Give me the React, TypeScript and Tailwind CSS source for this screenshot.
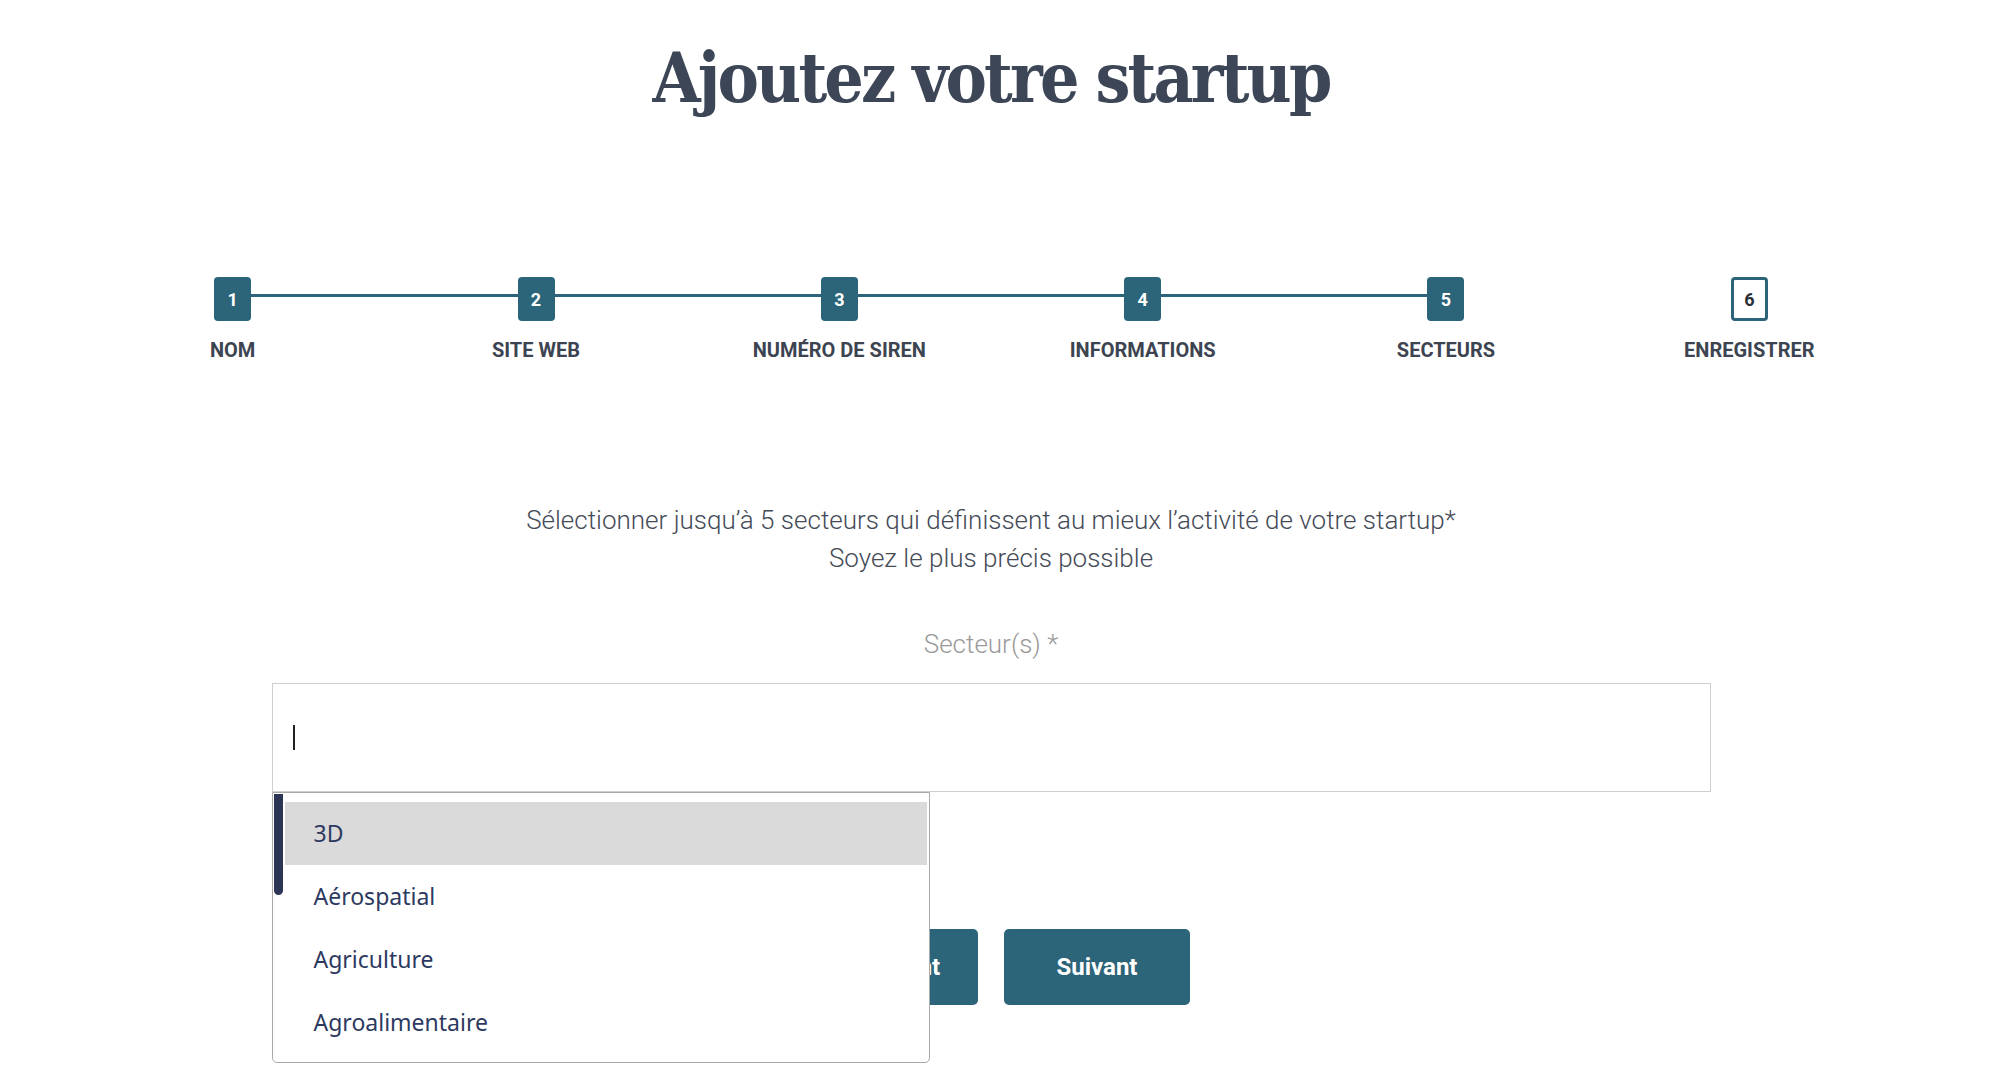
import React from "react";

const steps = [
  { n: 1, label: "NOM", done: true },
  { n: 2, label: "SITE WEB", done: true },
  { n: 3, label: "NUMÉRO DE SIREN", done: true },
  { n: 4, label: "INFORMATIONS", done: true },
  { n: 5, label: "SECTEURS", done: true },
  { n: 6, label: "ENREGISTRER", done: false },
];

const sectors = ["3D", "Aérospatial", "Agriculture", "Agroalimentaire"];

function Stepper() {
  return (
    <div className="mx-auto mt-[163px] flex w-[1820px]">
      {steps.map((s, i) => {
        const prev = i > 0 && s.done;
        const next = i < steps.length - 1 && steps[i + 1].done;
        return (
          <div key={s.n} className="flex w-[303.33px] flex-col items-center">
            <div className="flex w-full items-start">
              <div className={`mt-[17px] h-[3px] flex-1 ${prev ? "bg-[#2c6479]" : "bg-transparent"}`} />
              {s.done ? (
                <div className="flex h-[44px] w-[37px] items-center justify-center rounded-[4px] bg-[#2c6479] text-[18px] font-bold text-white">
                  {s.n}
                </div>
              ) : (
                <div className="flex h-[44px] w-[37px] items-center justify-center rounded-[4px] border-[3px] border-[#2c6479] bg-white text-[18px] font-bold text-[#2b2f36]">
                  {s.n}
                </div>
              )}
              <div className={`mt-[17px] h-[3px] flex-1 ${next ? "bg-[#2c6479]" : "bg-transparent"}`} />
            </div>
            <div className="mt-[17px] text-[20px] leading-[24px] font-bold whitespace-nowrap text-[#3d4451]">
              {s.label}
            </div>
          </div>
        );
      })}
    </div>
  );
}

export default function App() {
  return (
    <main className="min-h-screen bg-white pr-[17px] font-['Roboto',sans-serif] text-[#3c4656]">
      <h1 className="pt-[42px] text-center font-['DejaVu_Serif_Condensed','DejaVu_Serif',serif] text-[69px] leading-[72px] font-bold tracking-[-2.8px] text-[#3c4656]">
        Ajoutez votre startup
      </h1>

      <Stepper />

      <div className="mt-[139px] text-center text-[26px] leading-[38px] font-light text-[#454b57]">
        <p>Sélectionner jusqu’à 5 secteurs qui définissent au mieux l’activité de votre startup*</p>
        <p>Soyez le plus précis possible</p>
      </div>

      <p className="mt-[51px] text-center text-[26px] leading-[32px] font-light text-[#9a9a9a]">Secteur(s) *</p>

      <div className="relative mx-auto mt-[23px] w-[1439px]">
        <div className="flex h-[109px] items-center border border-[#cfcfcf] bg-white pl-[20px]">
          <span className="h-[25px] w-[2px] bg-[#222]" />
        </div>

        <div className="absolute top-full left-0 z-10 h-[271px] w-[658px] rounded-b-[5px] border border-[#a9a9a9] bg-white pt-[9px] pr-[2px] pb-[8px] pl-[12px] font-['Noto_Sans',sans-serif] text-[23px] text-[#2d3a5f]">
          <div className="absolute top-[1px] left-[1px] h-[101px] w-[9px] rounded-b-full rounded-t-[5px] bg-[#2c3555]" />
          {sectors.map((s, i) => (
            <div
              key={s}
              className={`flex h-[63px] items-center pl-[29px] ${i === 0 ? "bg-[#dadada]" : "bg-white"}`}
            >
              {s}
            </div>
          ))}
        </div>
      </div>

      <div className="mt-[137px] flex justify-center gap-[26px] pb-[80px]">
        <button
          type="button"
          className="h-[76px] w-[186px] rounded-[5px] bg-[#2c6479] text-[24px] font-bold text-white"
        >
          Précédent
        </button>
        <button
          type="button"
          className="h-[76px] w-[186px] rounded-[5px] bg-[#2c6479] text-[24px] font-bold text-white"
        >
          Suivant
        </button>
      </div>
    </main>
  );
}
